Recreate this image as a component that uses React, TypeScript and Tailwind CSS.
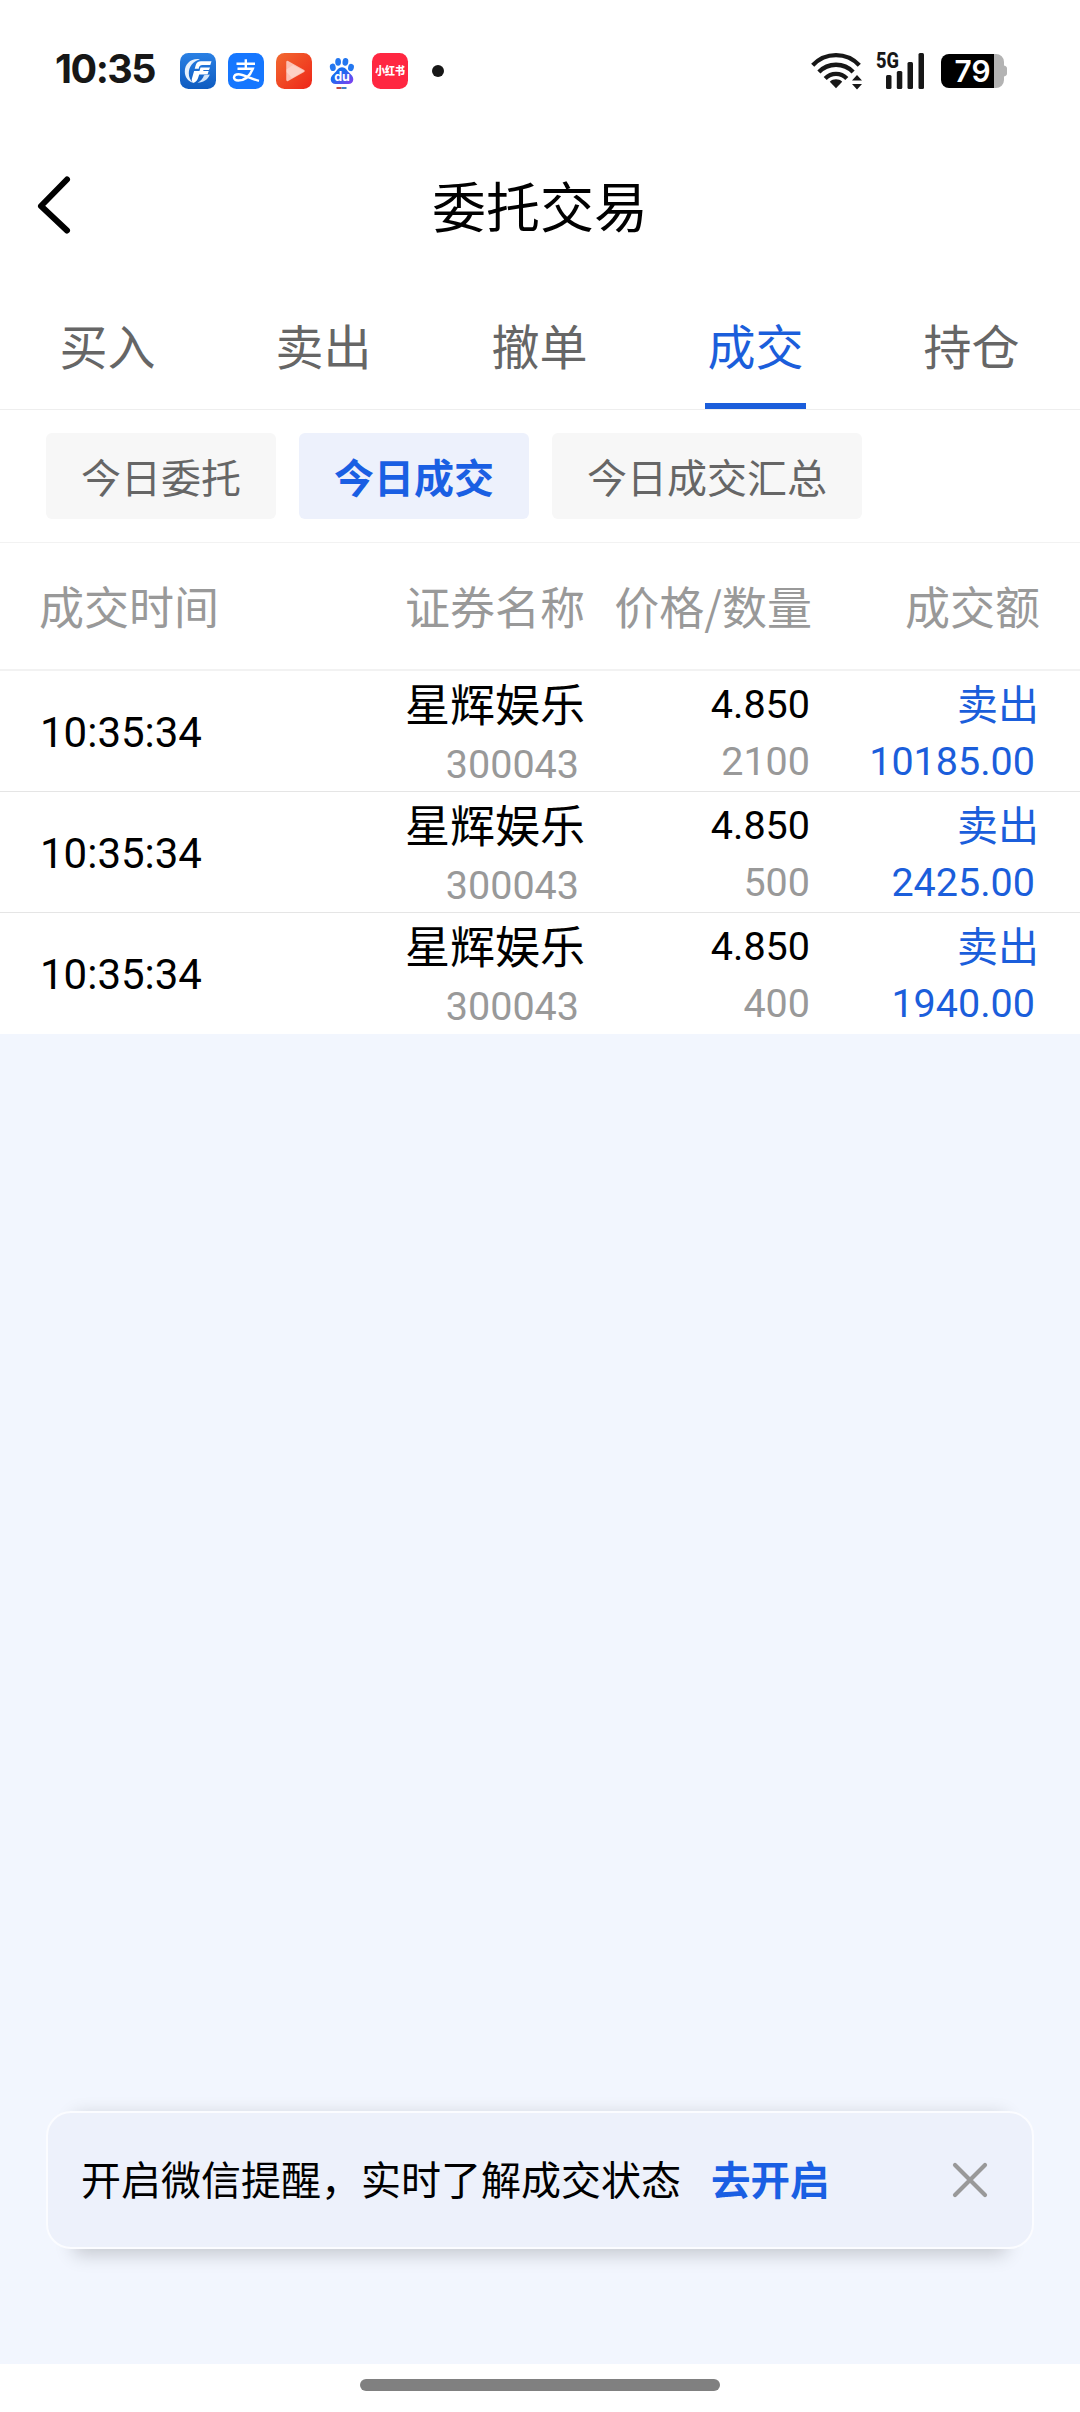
interface Trade {
  time: string
  name: string
  code: string
  price: string
  quantity: string
  side: string
  amount: string
}

const TABS = ['买入', '卖出', '撤单', '成交', '持仓']
const FILTERS = ['今日委托', '今日成交', '今日成交汇总']

const TRADES: Trade[] = [
  { time: '10:35:34', name: '星辉娱乐', code: '300043', price: '4.850', quantity: '2100', side: '卖出', amount: '10185.00' },
  { time: '10:35:34', name: '星辉娱乐', code: '300043', price: '4.850', quantity: '500', side: '卖出', amount: '2425.00' },
  { time: '10:35:34', name: '星辉娱乐', code: '300043', price: '4.850', quantity: '400', side: '卖出', amount: '1940.00' },
]

function BrokerIcon() {
  return (
    <svg className="size-9" viewBox="0 0 36 36">
      <defs>
        <linearGradient id="broker" x1="0" y1="0" x2="0" y2="1">
          <stop offset="0" stopColor="#2a80e4" />
          <stop offset="1" stopColor="#0e5bc0" />
        </linearGradient>
      </defs>
      <rect width="36" height="36" rx="8.5" fill="url(#broker)" />
      <path d="M20 6.300C11 5 4.800 11 4.800 18.500c0 5.500 3 9.500 8 11.300-2.700-2.800-4-5.800-4-9.500C8.800 14 12.500 8.800 20 6.300z" fill="#e8f1fc" />
      <path d="M31.500 8.200H21c-3 0-4.500 1.300-5.300 4l-1 3.500h4c.4-2.500 1.300-3.700 3.800-3.700h7.800z" fill="#fff" />
      <path d="M30 14.500h-9.500l-1 3.500h-5.400l-2.300 8c-.3 1.500.2 2.800 1.200 4 2.800-.8 4.500-2.700 5.400-6l.8-2.500h8.300l1.200-3.500h-5.500l.3-1h5.500z" fill="#fff" />
      <path d="M29.800 21.500c-1.800 4.800-5.800 8-12.300 8.300 3.500-1.800 5.500-4.300 6.500-7.500z" fill="#d3e5fa" />
    </svg>
  )
}

function PayIcon() {
  return (
    <svg className="size-9" viewBox="0 0 36 36">
      <rect width="36" height="36" rx="8.5" fill="#1677ff" />
      <g fill="none" stroke="#fff" strokeWidth="2.400">
        <path d="M8.500 10.800h18.500M17.800 6.300v9.500" />
        <path d="M9.500 15.800h15.300C22 23 16.500 27.500 10.200 27.500c-6 0-5.300-6.300.3-6.300 5 0 11.500 4.300 20.500 6.600" />
      </g>
    </svg>
  )
}

function VideoIcon() {
  return (
    <svg className="size-9" viewBox="0 0 36 36">
      <defs>
        <linearGradient id="video" x1="0" y1="0" x2="1" y2="1">
          <stop offset="0" stopColor="#f26a30" />
          <stop offset="1" stopColor="#ee2518" />
        </linearGradient>
      </defs>
      <rect width="36" height="36" rx="8.500" fill="url(#video)" />
      <path d="M11.500 9l16 9-16 9z" fill="#fcc0b2" stroke="#fcc0b2" strokeWidth="2.500" strokeLinejoin="round" />
      <path d="M10.500 16.500l6.500-4.500 11 6-12 7-5.500-6z" fill="#fddcd4" opacity="0.600" />
    </svg>
  )
}

function PawIcon() {
  return (
    <svg className="size-9 overflow-visible" viewBox="0 0 36 36">
      <defs>
        <linearGradient id="paw" x1="0" y1="0" x2="1" y2="1">
          <stop offset="0.400" stopColor="#1a6cf0" />
          <stop offset="1" stopColor="#8a3df0" />
        </linearGradient>
      </defs>
      <g fill="#2477f0">
        <ellipse cx="8.800" cy="14.300" rx="2.900" ry="3.700" transform="rotate(-12 8.800 14.300)" />
        <ellipse cx="14.100" cy="8.800" rx="2.900" ry="3.900" />
        <ellipse cx="21.400" cy="8.800" rx="2.900" ry="3.900" transform="rotate(8 21.400 8.800)" />
        <ellipse cx="27" cy="14.500" rx="2.900" ry="3.700" transform="rotate(12 27 14.500)" />
      </g>
      <path d="M18 14.200c3.500 0 4.700 3 7 5.300 2.500 2.500 4.300 4 4.300 6.800 0 3-2 4.700-5 4.700H11.700c-3 0-5-1.700-5-4.700 0-2.800 1.800-4.300 4.300-6.800 2.300-2.300 3.500-5.300 7-5.300z" fill="url(#paw)" />
      <text x="18" y="28" textAnchor="middle" fontSize="12.500" fontWeight="700" fill="#fff" className="font-['Inter',sans-serif]">du</text>
      <path d="M12.500 35h5" stroke="#c5473f" strokeWidth="2" />
      <path d="M17.500 35h5" stroke="#3f80c5" strokeWidth="2" />
    </svg>
  )
}

function NoteIcon() {
  return (
    <svg className="size-9 overflow-visible" viewBox="0 0 36 36">
      <rect width="36" height="36" rx="8.500" fill="#ff2741" />
      <text x="3.200" y="22.200" fontSize="10.800" fontWeight="900" fill="#fff" textLength="29.800" lengthAdjust="spacingAndGlyphs">小红书</text>
    </svg>
  )
}

function WifiIcon() {
  return (
    <svg className="h-[38px] w-[52px]" viewBox="0 0 52 38">
      <g fill="none" stroke="#171717" strokeWidth="4.300">
        <path d="M1.700 13.300C14.500-.200 35.500-.200 48.300 13.300" />
        <path d="M7.900 20C17 10.300 33 10.300 42.100 20" />
        <path d="M14.200 26.500c6-6.200 15.600-6.200 21.600 0" />
      </g>
      <path d="M25 36.200l-6.200-6.500c3.500-3.200 8.900-3.200 12.400 0z" fill="#171717" />
      <path d="M46 23l5 5.500H41zM46 37.500l5-5.500H41z" fill="#171717" />
    </svg>
  )
}

function SignalIcon() {
  return (
    <svg className="h-[50px] w-[50px]" viewBox="0 -5 50 50">
      <text x="0" y="17.800" fontSize="21.500" fontWeight="800" fill="#171717" textLength="23" lengthAdjust="spacingAndGlyphs" className="font-['Roboto',sans-serif]">5G</text>
      <g fill="#171717">
        <rect x="10" y="25" width="5.500" height="14" rx="1.500" />
        <rect x="20.800" y="21" width="5.500" height="18" rx="1.500" />
        <rect x="31.500" y="12" width="5.500" height="27" rx="1.500" />
        <rect x="42.500" y="3" width="5.500" height="36" rx="1.500" />
      </g>
    </svg>
  )
}

function BatteryIcon() {
  return (
    <svg className="h-[34px] w-[66px]" viewBox="0 0 66 34">
      <path d="M53 0h2a8 8 0 0 1 8 8v3.500c2.300.8 3 1.500 3 3v5c0 1.500-.7 2.200-3 3V26a8 8 0 0 1-8 8h-2z" fill="#b3b3b3" />
      <path d="M8 0h45v34H8a8 8 0 0 1-8-8V8a8 8 0 0 1 8-8z" fill="#000" />
      <text x="13.500" y="28" fontSize="30" fontWeight="600" fill="#fff" textLength="36" lengthAdjust="spacingAndGlyphs" className="font-['Inter',sans-serif]">79</text>
    </svg>
  )
}

function StatusBar() {
  return (
    <div className="flex h-[142px] items-center pl-[55px] pr-[73px]">
      <span className="-mt-[2px] w-[125px] font-['Inter',sans-serif] text-[39.5px] leading-none font-bold tracking-[-1.5px] text-[#171717]">
        10:35
      </span>
      <div className="flex items-center gap-3">
        <BrokerIcon />
        <PayIcon />
        <VideoIcon />
        <PawIcon />
        <NoteIcon />
      </div>
      <span className="ml-6 size-3 rounded-full bg-[#171717]" />
      <div className="ml-auto flex items-center">
        <WifiIcon />
        <span className="ml-[13px] -mt-[3px]"><SignalIcon /></span>
        <span className="ml-[15px]"><BatteryIcon /></span>
      </div>
    </div>
  )
}

function TradeRow({ trade }: { trade: Trade }) {
  return (
    <div className="grid h-[121px] grid-cols-[300px_245px_227px_228px] border-b border-[#e5e5e5] px-10 last:border-b-0">
      <span className="pt-[2px] self-center font-['Roboto',sans-serif] text-[42px] leading-[60px] text-black">{trade.time}</span>
      <div className="flex flex-col items-end">
        <span className="h-[66px] text-[45px] leading-[64px] text-black">{trade.name}</span>
        <span className="pr-[6px] font-['Roboto',sans-serif] text-[39.5px] leading-[56px] text-[#999]">{trade.code}</span>
      </div>
      <div className="flex flex-col items-end pr-[2px] font-['Roboto',sans-serif] text-[39.5px]">
        <span className="h-[61px] leading-[67px] text-black">{trade.price}</span>
        <span className="leading-[60px] text-[#999]">{trade.quantity}</span>
      </div>
      <div className="flex flex-col items-end text-[#1b5edb]">
        <span className="h-[61px] pr-[1px] text-[41px] leading-[62px]">{trade.side}</span>
        <span className="pr-[5px] font-['Roboto',sans-serif] text-[39.5px] leading-[60px]">{trade.amount}</span>
      </div>
    </div>
  )
}

function ReminderBanner() {
  return (
    <div className="relative isolate mx-[46px] h-[138px]">
      <div className="absolute inset-x-7 inset-y-0 -z-10 shadow-[0_5px_18px_rgba(0,0,0,0.2)]" />
      <div className="flex h-full items-center rounded-[25px] border-2 border-[#fbfcff] bg-[#edf1fb] pl-[33px] pr-[43px] text-[40px] leading-[58px]">
        <span className="-mt-[4px] text-black">开启微信提醒，实时了解成交状态</span>
        <button className="-mt-[4px] ml-[30px] text-[39.5px] font-bold text-[#1a5fe3]">去开启</button>
        <svg className="ml-auto size-[38px]" viewBox="0 0 38 38" fill="none" stroke="#999" strokeWidth="4.200" strokeLinecap="round">
          <path d="M4 4l30 30M34 4L4 34" />
        </svg>
      </div>
    </div>
  )
}

export default function App() {
  return (
    <div className="flex h-[2412px] w-[1080px] flex-col overflow-hidden bg-[#f2f6fe] font-['Noto_Sans_CJK_SC',sans-serif]">
      <div className="bg-white">
        <StatusBar />

        <header className="grid h-[128px] grid-cols-[1fr_auto_1fr] items-center text-black">
          <svg className="-mt-[3px] ml-[36px] h-[60px] w-[36px]" viewBox="0 0 36 60" fill="none" stroke="#000" strokeWidth="6" strokeLinecap="round" strokeLinejoin="round">
            <path d="M31 4.500L5 31 31 55.500" />
          </svg>
          <h1 className="-mt-[3px] text-[54px] leading-[78px]">委托交易</h1>
        </header>

        <nav className="grid h-[140px] grid-cols-5 border-b border-[#eee]">
          {TABS.map((tab) => (
            <div key={tab} className="flex justify-center">
              <span
                className={`mr-[1px] h-[139px] w-[101px] text-center text-[48px] leading-[148px] ${
                  tab === '成交' ? 'border-b-6 border-[#1b5edb] text-[#1b5edb]' : 'text-[#666]'
                }`}
              >
                {tab}
              </span>
            </div>
          ))}
        </nav>

        <div className="flex h-[133px] items-center gap-[23px] border-b border-[#f2f2f2] pl-[46px]">
          {FILTERS.map((filter) => (
            <span
              key={filter}
              className={`h-[86px] rounded-[6px] px-[35px] text-[40px] leading-[86px] ${
                filter === '今日成交' ? 'bg-[#edf1fc] font-bold text-[#1a5fe3]' : 'bg-[#f7f7f7] text-[#666]'
              }`}
            >
              {filter}
            </span>
          ))}
        </div>

        <div className="grid h-[128px] grid-cols-[301px_245px_227px_228px] border-b-2 border-[#f2f2f2] pr-10 pl-[39px] text-[45px] leading-[125px] text-[#999]">
          <span>成交时间</span>
          <span className="text-right">证券名称</span>
          <span className="text-right">价格/数量</span>
          <span className="text-right">成交额</span>
        </div>

        <div>
          {TRADES.map((trade) => (
            <TradeRow key={trade.amount} trade={trade} />
          ))}
        </div>
      </div>

      <div className="mt-auto pb-[115px]">
        <ReminderBanner />
      </div>

      <div className="flex h-12 justify-center bg-white pt-[15px]">
        <span className="h-3 w-[360px] rounded-full bg-[#808080]" />
      </div>
    </div>
  )
}
